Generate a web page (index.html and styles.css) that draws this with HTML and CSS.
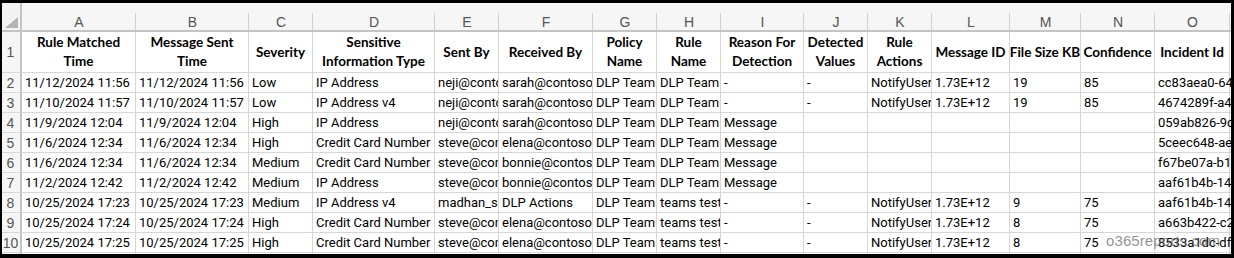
FILE: index.html
```html
<!DOCTYPE html>
<html>
<head>
<meta charset="utf-8">
<link rel="stylesheet" href="styles.css">
</head>
<body>
<div class="frame">
  <div class="sheet">
    <div class="corner"><span class="tri"></span></div>
    <div class="ch">A</div><div class="ch">B</div><div class="ch">C</div><div class="ch">D</div><div class="ch">E</div><div class="ch">F</div><div class="ch">G</div><div class="ch">H</div><div class="ch">I</div><div class="ch">J</div><div class="ch">K</div><div class="ch">L</div><div class="ch">M</div><div class="ch">N</div><div class="ch">O</div><div class="ch"></div>

    <div class="rh">1</div>
    <div class="th">Rule Matched<br>Time</div>
    <div class="th">Message Sent<br>Time</div>
    <div class="th">Severity</div>
    <div class="th">Sensitive<br>Information Type</div>
    <div class="th">Sent By</div>
    <div class="th">Received By</div>
    <div class="th">Policy<br>Name</div>
    <div class="th">Rule<br>Name</div>
    <div class="th">Reason For<br>Detection</div>
    <div class="th">Detected<br>Values</div>
    <div class="th">Rule<br>Actions</div>
    <div class="th">Message ID</div>
    <div class="th">File Size KB</div>
    <div class="th">Confidence</div>
    <div class="th">Incident Id</div>
    <div class="th"></div>

    <div class="rh">2</div>
    <div class="c">11/12/2024 11:56</div><div class="c">11/12/2024 11:56</div><div class="c">Low</div><div class="c">IP Address</div><div class="c">neji@contoso.com</div><div class="c">sarah@contoso.com</div><div class="c">DLP Teams</div><div class="c">DLP Teams</div><div class="c">-</div><div class="c">-</div><div class="c">NotifyUser</div><div class="c">1.73E+12</div><div class="c">19</div><div class="c">85</div><div class="c over">cc83aea0-64f2-4b1c</div><div class="c"></div>

    <div class="rh">3</div>
    <div class="c">11/10/2024 11:57</div><div class="c">11/10/2024 11:57</div><div class="c">Low</div><div class="c">IP Address v4</div><div class="c">neji@contoso.com</div><div class="c">sarah@contoso.com</div><div class="c">DLP Teams</div><div class="c">DLP Teams</div><div class="c">-</div><div class="c">-</div><div class="c">NotifyUser</div><div class="c">1.73E+12</div><div class="c">19</div><div class="c">85</div><div class="c over">4674289f-a4c1-48d2</div><div class="c"></div>

    <div class="rh">4</div>
    <div class="c">11/9/2024 12:04</div><div class="c">11/9/2024 12:04</div><div class="c">High</div><div class="c">IP Address</div><div class="c">neji@contoso.com</div><div class="c">sarah@contoso.com</div><div class="c">DLP Teams</div><div class="c">DLP Teams</div><div class="c">Message</div><div class="c"></div><div class="c"></div><div class="c"></div><div class="c"></div><div class="c"></div><div class="c over">059ab826-9c3e-41a7</div><div class="c"></div>

    <div class="rh">5</div>
    <div class="c">11/6/2024 12:34</div><div class="c">11/6/2024 12:34</div><div class="c">High</div><div class="c">Credit Card Number</div><div class="c">steve@contoso.com</div><div class="c">elena@contoso.com</div><div class="c">DLP Teams</div><div class="c">DLP Teams</div><div class="c">Message</div><div class="c"></div><div class="c"></div><div class="c"></div><div class="c"></div><div class="c"></div><div class="c over">5ceec648-ae21-4f90</div><div class="c"></div>

    <div class="rh">6</div>
    <div class="c">11/6/2024 12:34</div><div class="c">11/6/2024 12:34</div><div class="c">Medium</div><div class="c">Credit Card Number</div><div class="c">steve@contoso.com</div><div class="c">bonnie@contoso.com</div><div class="c">DLP Teams</div><div class="c">DLP Teams</div><div class="c">Message</div><div class="c"></div><div class="c"></div><div class="c"></div><div class="c"></div><div class="c"></div><div class="c over">f67be07a-b1d4-4c8e</div><div class="c"></div>

    <div class="rh">7</div>
    <div class="c">11/2/2024 12:42</div><div class="c">11/2/2024 12:42</div><div class="c">Medium</div><div class="c">IP Address</div><div class="c">steve@contoso.com</div><div class="c">bonnie@contoso.com</div><div class="c">DLP Teams</div><div class="c">DLP Teams</div><div class="c">Message</div><div class="c"></div><div class="c"></div><div class="c"></div><div class="c"></div><div class="c"></div><div class="c over">aaf61b4b-14c7-4e3a</div><div class="c"></div>

    <div class="rh">8</div>
    <div class="c">10/25/2024 17:23</div><div class="c">10/25/2024 17:23</div><div class="c">Medium</div><div class="c">IP Address v4</div><div class="c">madhan_s@contoso.com</div><div class="c">DLP Actions</div><div class="c">DLP Teams</div><div class="c">teams test</div><div class="c">-</div><div class="c">-</div><div class="c">NotifyUser</div><div class="c">1.73E+12</div><div class="c">9</div><div class="c">75</div><div class="c over">aaf61b4b-14c7-4e3a</div><div class="c"></div>

    <div class="rh">9</div>
    <div class="c">10/25/2024 17:24</div><div class="c">10/25/2024 17:24</div><div class="c">High</div><div class="c">Credit Card Number</div><div class="c">steve@contoso.com</div><div class="c">elena@contoso.com</div><div class="c">DLP Teams</div><div class="c">teams test</div><div class="c">-</div><div class="c">-</div><div class="c">NotifyUser</div><div class="c">1.73E+12</div><div class="c">8</div><div class="c">75</div><div class="c over">a663b422-c2e8-4d17</div><div class="c"></div>

    <div class="rh">10</div>
    <div class="c">10/25/2024 17:25</div><div class="c">10/25/2024 17:25</div><div class="c">High</div><div class="c">Credit Card Number</div><div class="c">steve@contoso.com</div><div class="c">elena@contoso.com</div><div class="c">DLP Teams</div><div class="c">teams test</div><div class="c">-</div><div class="c">-</div><div class="c">NotifyUser</div><div class="c">1.73E+12</div><div class="c">8</div><div class="c">75</div><div class="c over">8533a1dc-dfe0-4b62</div><div class="c"></div>

    <div class="rh"></div>
    <div class="c"></div><div class="c"></div><div class="c"></div><div class="c"></div><div class="c"></div><div class="c"></div><div class="c"></div><div class="c"></div><div class="c"></div><div class="c"></div><div class="c"></div><div class="c"></div><div class="c"></div><div class="c"></div><div class="c"></div><div class="c"></div>
  </div>
  <div class="watermark">o365reports.com</div>
</div>
</body>
</html>
```

FILE: styles.css
```css
html, body {
  margin: 0;
  padding: 0;
  background: #fff;
}

.frame {
  position: relative;
  width: 1234px;
  height: 258px;
  box-sizing: border-box;
  border-style: solid;
  border-color: #000;
  border-width: 3px 3px 4px 2px;
  overflow: hidden;
  background: #fff;
}

.sheet {
  display: grid;
  grid-template-columns: 20px 114px 113px 64px 122px 64px 94px 64px 64px 83px 64px 64px 78px 71px 74px 75px 1fr;
  grid-template-rows: 29px 41px repeat(10, 20px);
  font-family: Roboto, "Liberation Sans", Arial, sans-serif;
  font-size: 13px;
  color: #000;
}

.sheet > div {
  box-sizing: border-box;
  white-space: nowrap;
  overflow: hidden;
}

.corner {
  position: relative;
  background: #f3f3f3;
  border-right: 2px solid #c4c4c4;
  border-bottom: 2px solid #c4c4c4;
}

.tri {
  position: absolute;
  right: 2px;
  bottom: 2px;
  width: 0;
  height: 0;
  border-left: 13px solid transparent;
  border-bottom: 11px solid #b4b4b4;
}

.ch {
  position: relative;
  background: #f6f6f6;
  border-bottom: 2px solid #c4c4c4;
  color: #555;
  font-family: "Liberation Sans", Arial, sans-serif;
  font-size: 14px;
  text-align: center;
  padding-top: 11px;
  line-height: 16px;
}

.ch::after {
  content: "";
  position: absolute;
  right: 0;
  top: 10px;
  bottom: 0;
  width: 1px;
  background: #d0d0d0;
}

.rh {
  background: #f6f6f6;
  border-right: 2px solid #c4c4c4;
  border-bottom: 1px solid #d6d6d6;
  color: #555;
  font-family: "Liberation Sans", Arial, sans-serif;
  font-size: 14px;
  display: flex;
  align-items: center;
  justify-content: center;
  padding-right: 1px;
}

.th {
  border-right: 1px solid #d6d6d6;
  border-bottom: 1px solid #d6d6d6;
  font-family: Lato, "Liberation Sans", Arial, sans-serif;
  font-weight: bold;
  font-size: 13.5px;
  line-height: 19px;
  text-align: center;
  display: flex;
  align-items: center;
  justify-content: center;
}

.c {
  border-right: 1px solid #d6d6d6;
  border-bottom: 1px solid #d6d6d6;
  padding-left: 3px;
  line-height: 19px;
}

.sheet > .over {
  overflow: visible;
  position: relative;
  z-index: 1;
}

.watermark {
  position: absolute;
  left: 1104px;
  top: 229px;
  font-family: "Liberation Sans", Arial, sans-serif;
  font-size: 15px;
  color: rgba(110, 110, 110, 0.75);
  z-index: 2;
  letter-spacing: 0.1px;
}
```
